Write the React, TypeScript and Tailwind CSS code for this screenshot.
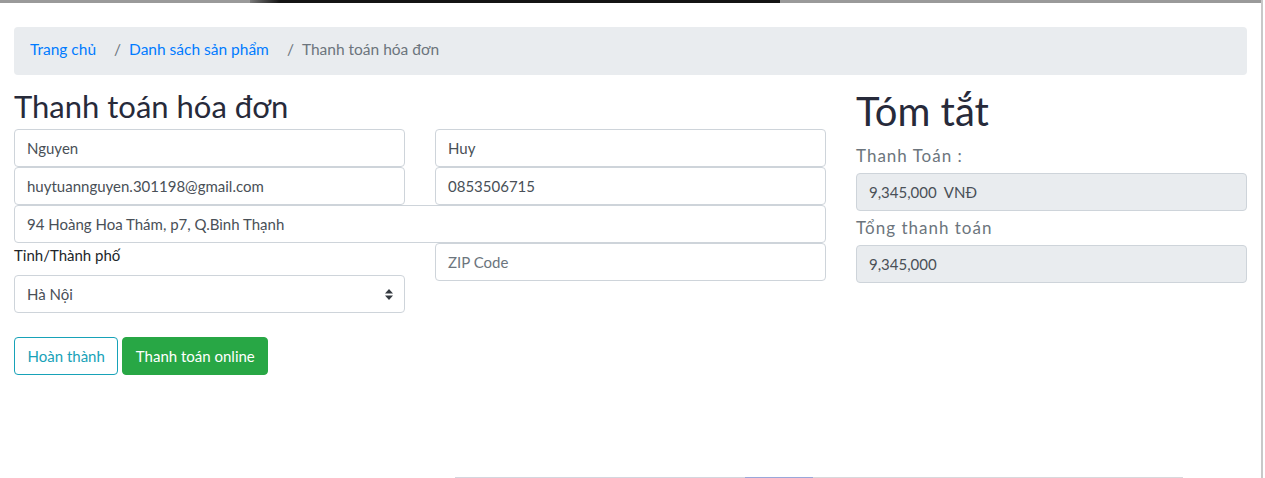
const font = { fontFamily: 'Lato, "Noto Sans", sans-serif' };

const crumbs = [
    { label: 'Trang chủ', href: '#' },
    { label: 'Danh sách sản phẩm', href: '#' },
];

function Field({ value, className = '' }: { value: string; className?: string }) {
    return (
        <div
            className={`flex h-[38px] items-center rounded-[4px] border border-[#ced4da] bg-white px-3 text-[15px] text-[#495057] ${className}`}
        >
            {value}
        </div>
    );
}

function ReadOnly({ value }: { value: string }) {
    return (
        <div className="flex h-[38px] items-center whitespace-pre rounded-[4px] border border-[#ced4da] bg-[#e9ecef] px-3 text-[15px] text-[#495057]">
            {value}
        </div>
    );
}

export default function App() {
    return (
        <div className="flex h-[478px] w-[1265px] overflow-hidden bg-white" style={font}>
            <div className="flex w-[1261px] flex-col">
                {/* banner image edge peeking at the top */}
                <div className="flex h-[3px] w-full">
                    <div className="w-[250px] bg-[#9a9a9a]"></div>
                    <div className="w-[30px] bg-gradient-to-r from-[#7a7a7a] to-[#151515]"></div>
                    <div className="w-[500px] bg-[#141414]"></div>
                    <div className="flex-1 bg-[#9a9a9a]"></div>
                </div>

                <div className="px-[14px]">
                    <nav className="mt-[24px] flex h-[48px] w-[1233px] items-start rounded-[4px] bg-[#e9ecef] pl-4 pt-[10px] text-[15.5px] leading-[24px]">
                        {crumbs.map((c) => (
                            <span key={c.label} className="flex">
                                <a href={c.href} className="text-[#007bff]">
                                    {c.label}
                                </a>
                                <span className="ml-[18px] mr-[8px] text-[#6c757d]">/</span>
                            </span>
                        ))}
                        <span className="text-[#6c757d]">Thanh toán hóa đơn</span>
                    </nav>

                    <div className="mt-[12px] flex gap-[30px]">
                        <div className="w-[812px]">
                            <h2 className="mb-[4px] h-[38px] text-[31px] leading-[38px] text-[#272a3a]">
                                Thanh toán hóa đơn
                            </h2>
                            <div className="grid grid-cols-2 gap-x-[30px]">
                                <Field value="Nguyen" />
                                <Field value="Huy" />
                                <Field value="huytuannguyen.301198@gmail.com" />
                                <Field value="0853506715" />
                            </div>
                            <Field value="94 Hoàng Hoa Thám, p7, Q.Bình Thạnh" />
                            <div className="grid grid-cols-2 gap-x-[30px]">
                                <div>
                                    <label className="block h-[24px] text-[15px] leading-[24px] text-[#212529]">
                                        Tỉnh/Thành phố
                                    </label>
                                    <div className="mt-[8px] flex h-[38px] items-center justify-between rounded-[4px] border border-[#ced4da] bg-white pl-3 pr-[11px] text-[15px] text-[#495057]">
                                        <span>Hà Nội</span>
                                        <svg width="8" height="11" viewBox="0 0 8 11">
                                            <path d="M4 0 L8 4.5 H0 Z" fill="#343a40" />
                                            <path d="M4 11 L8 6.5 H0 Z" fill="#343a40" />
                                        </svg>
                                    </div>
                                </div>
                                <div>
                                    <div className="flex h-[38px] items-center rounded-[4px] border border-[#ced4da] bg-white px-3 text-[15px] text-[#6c757d]">
                                        ZIP Code
                                    </div>
                                </div>
                            </div>
                            <div className="mt-[24px] flex gap-[4px]">
                                <button className="h-[38px] rounded-[4px] border border-[#17a2b8] px-[12.5px] text-[15px] text-[#17a2b8]">
                                    Hoàn thành
                                </button>
                                <button className="h-[38px] rounded-[4px] border border-[#28a745] bg-[#28a745] px-[12.5px] text-[15px] text-white">
                                    Thanh toán online
                                </button>
                            </div>
                        </div>

                        <div className="w-[391px]">
                            <h3 className="mb-[9px] h-[48px] text-[40px] leading-[48px] text-[#272a3a]">
                                Tóm tắt
                            </h3>
                            <p className="my-[5px] h-[24px] text-[17px] leading-[24px] tracking-[1px] text-[#6c757d]">
                                Thanh Toán :
                            </p>
                            <ReadOnly value="9,345,000  VNĐ" />
                            <p className="my-[5px] h-[24px] text-[17px] leading-[24px] tracking-[1px] text-[#6c757d]">
                                Tổng thanh toán
                            </p>
                            <ReadOnly value="9,345,000" />
                        </div>
                    </div>
                </div>

                {/* top edge of the next section */}
                <div className="mt-auto flex h-[1px] w-full">
                    <div className="w-[455px]"></div>
                    <div className="w-[290px] bg-[#d4d6de]"></div>
                    <div className="w-[68px] bg-[#9aa8da]"></div>
                    <div className="w-[370px] bg-[#d8d8dc]"></div>
                </div>
            </div>
            <div className="flex w-[4px]">
                <div className="w-[2px] bg-[#c8c8c8]"></div>
            </div>
        </div>
    );
}
